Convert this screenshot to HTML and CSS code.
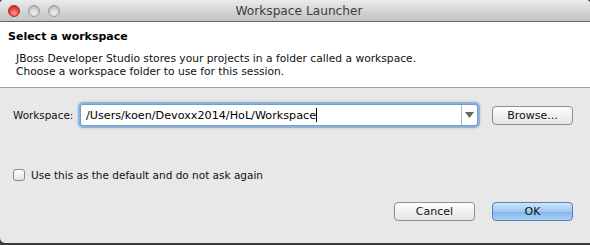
FILE: index.html
```html
<!DOCTYPE html>
<html lang="en">
<head>
    <meta charset="UTF-8">
    <title>Workspace Launcher</title>
    <link rel="stylesheet" href="styles.css">
</head>
<body>
    <div class="window">
        <div class="titlebar">
            <div class="lights">
                <span class="light close"></span>
                <span class="light"></span>
                <span class="light"></span>
            </div>
            <div class="title">Workspace Launcher</div>
        </div>

        <div class="banner">
            <h1>Select a workspace</h1>
            <p>JBoss Developer Studio stores your projects in a folder called a workspace.<br>
            Choose a workspace folder to use for this session.</p>
        </div>

        <div class="body">
            <div class="field-row">
                <label class="field-label">Workspace:</label>
                <div class="combo">
                    <div class="combo-text">/Users/koen/Devoxx2014/HoL/Workspace<span class="caret"></span></div>
                    <div class="combo-arrow">
                        <svg width="9" height="6" viewBox="0 0 9 6"><path d="M0 0 L9 0 L4.5 6 Z" fill="#666"/></svg>
                    </div>
                </div>
                <button class="btn">Browse...</button>
            </div>

            <div class="check-row">
                <span class="checkbox"></span>
                <span>Use this as the default and do not ask again</span>
            </div>

            <div class="actions">
                <button class="btn">Cancel</button>
                <button class="btn primary">OK</button>
            </div>
        </div>
    </div>
</body>
</html>
```

FILE: styles.css
```css
* {
    margin: 0;
    padding: 0;
    box-sizing: border-box;
}

body {
    width: 590px;
    height: 245px;
    overflow: hidden;
    background: #3a3a3a;
    font-family: "DejaVu Sans", "Liberation Sans", sans-serif;
    font-size: 11px;
    color: #111;
}

.window {
    height: 243px;
    background: #e8e8e8;
    border-radius: 4px 4px 0 5px;
    overflow: hidden;
    display: flex;
    flex-direction: column;
}

.titlebar {
    height: 22px;
    display: flex;
    align-items: center;
    background: linear-gradient(#ececec, #d2d2d2 60%, #c4c4c4);
    border-bottom: 1px solid #666;
}

.lights {
    display: flex;
    gap: 8px;
    padding-left: 8px;
}

.light {
    width: 12px;
    height: 12px;
    border-radius: 50%;
    background: radial-gradient(circle at 50% 70%, #f4f4f4, #c8c8c8 60%, #a6a6a6);
    border: 1px solid #9c9c9c;
}

.light.close {
    background: radial-gradient(circle at 50% 70%, #ff9a94, #e83a33 60%, #b0201b);
    border-color: #a5302a;
}

.title {
    flex: 1;
    text-align: center;
    font-size: 12.2px;
    color: #3d3d3d;
    margin-left: -52px;
    padding-top: 1px;
}

.banner {
    background: #fff;
    height: 66px;
    border-bottom: 1px solid #a0a0a0;
    padding: 8px 8px 0;
}

.banner h1 {
    font-size: 11px;
    font-weight: bold;
    color: #000;
    line-height: 14px;
}

.banner p {
    margin-top: 8px;
    padding-left: 8px;
    font-size: 10.7px;
    line-height: 13px;
    color: #111;
}

.body {
    flex: 1;
    display: flex;
    flex-direction: column;
    padding: 16px 17px 0 13px;
}

.field-row {
    display: flex;
    align-items: center;
    height: 22px;
}

.field-label {
    width: 67px;
    font-size: 10.4px;
}

.combo {
    width: 398px;
    height: 22px;
    display: flex;
    background: #fff;
    border: 1px solid #7a9cc4;
    border-radius: 3px;
    box-shadow: 0 0 0 2px #8fb4dc, 0 0 3px 2px #a9c6e6;
}

.combo-text {
    flex: 1;
    padding: 3px 0 0 5px;
    font-size: 11.2px;
    line-height: 15px;
    color: #000;
    white-space: nowrap;
}

.caret {
    display: inline-block;
    width: 1px;
    height: 14px;
    background: #000;
    vertical-align: -3px;
}

.combo-arrow {
    width: 16px;
    border-left: 1px solid #b8b8b8;
    display: flex;
    align-items: center;
    justify-content: center;
}

.btn {
    width: 81px;
    height: 19px;
    margin-left: 14px;
    border: 1px solid #8e8e8e;
    border-radius: 4px;
    background: linear-gradient(#ffffff, #f1f1f1 50%, #e4e4e4);
    font-family: inherit;
    font-size: 11px;
    color: #111;
}

.check-row {
    display: flex;
    align-items: center;
    gap: 6px;
    margin-top: 43px;
    font-size: 10.5px;
}

.checkbox {
    width: 12px;
    height: 12px;
    border: 1px solid #8a8a8a;
    border-radius: 3px;
    background: linear-gradient(#fdfdfd, #e6e6e6);
}

.actions {
    display: flex;
    justify-content: flex-end;
    gap: 17px;
    margin-top: 21px;
}

.actions .btn {
    margin-left: 0;
}

.btn.primary {
    border-color: #5a7fb2;
    background: linear-gradient(#cfe4fb, #9ec8f2 50%, #7fb4ec 51%, #acd3f8);
}
```
